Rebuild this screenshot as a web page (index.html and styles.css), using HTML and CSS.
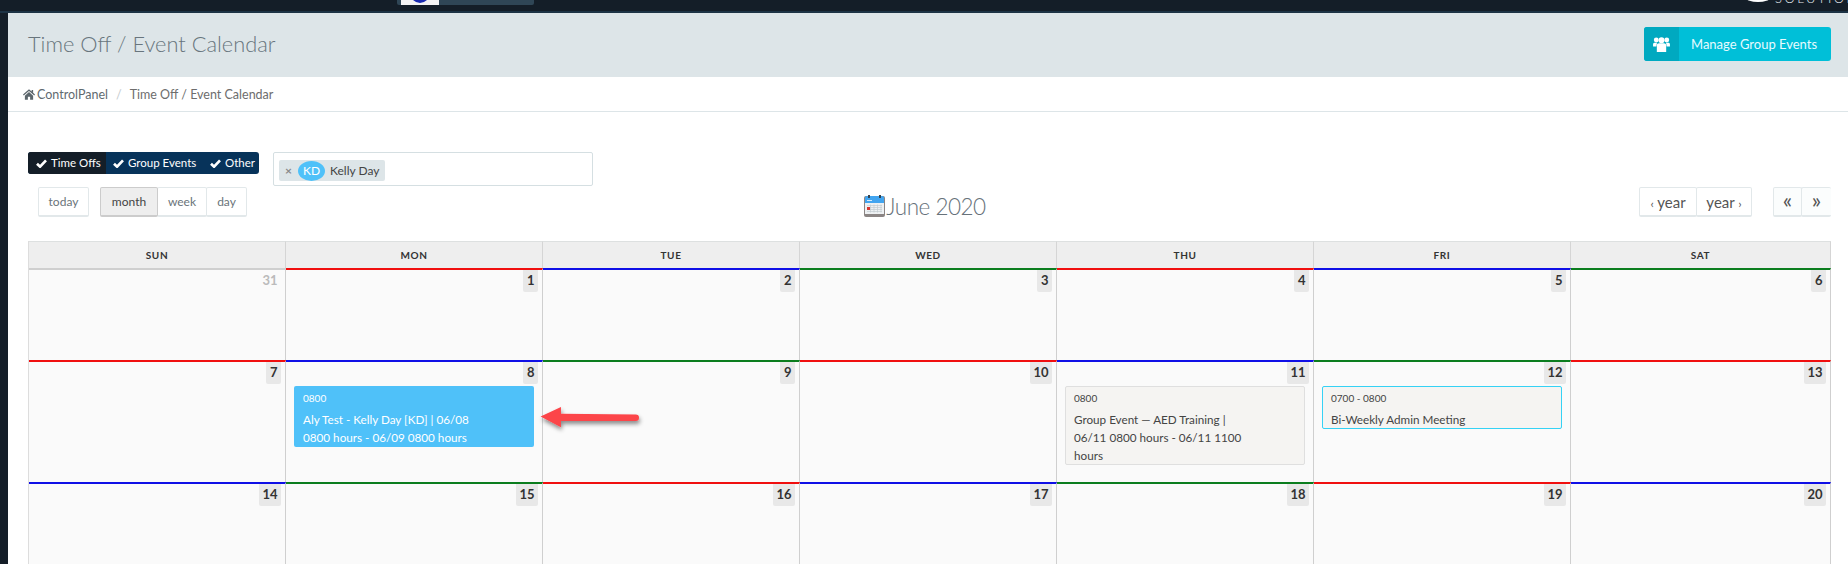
FILE: index.html
```html
<!DOCTYPE html>
<html lang="en">
<head>
<meta charset="utf-8">
<title>Time Off / Event Calendar</title>
<link rel="stylesheet" href="styles.css">
</head>
<body>
<header class="topbar">
  <div class="logo-tab">
    <div class="logo-box"><svg class="logo-mark" viewBox="0 0 16 3"><path d="M1 0h14l-3 2-4 1-4-1z" fill="#1a2bb0"/></svg></div>
  </div>
  <div class="brand">
    <svg class="brand-mark" viewBox="0 0 24 2"><ellipse cx="12" cy="-2" rx="12" ry="4" fill="#fff"/></svg>
    <span class="brand-text">SOLUTIONS</span>
  </div>
</header>
<div class="layout">
  <aside class="sidebar"></aside>
  <main class="main">
    <section class="page-head">
      <h1 class="page-title">Time Off / Event Calendar</h1>
      <a class="manage-btn">
        <span class="manage-icon">
          <svg viewBox="0 0 18 16" class="users-icon"><circle cx="3.400" cy="3.200" r="2.600"/><circle cx="14.600" cy="3.200" r="2.600"/><circle cx="9" cy="3.400" r="3.200"/><path d="M0 10V7.600c0-1 .8-1.600 1.800-1.600h2.400L3.400 10zM18 10V7.600c0-1-.8-1.600-1.800-1.600h-2.400l.8 4zM4 16V9c0-1.600 1-2.400 2.400-2.400h5.200C13 6.600 14 7.400 14 9v7z"/></svg>
        </span>
        <span class="manage-label">Manage Group Events</span>
      </a>
    </section>
    <nav class="crumbs">
      <svg viewBox="0 0 16 14" class="home-icon"><path d="M8 0 0 7l1 1.200L8 2.200l7 6L16 7l-2.500-2.200V1h-2v2L8 0zM2.500 8.600V14h4v-4h3v4h4V8.600L8 3.800z"/></svg>
      <span class="crumb-link">ControlPanel</span>
      <span class="crumb-sep">/</span>
      <span class="crumb-current">Time Off / Event Calendar</span>
    </nav>
    <section class="content">
      <div class="filters">
        <div class="toggle">
          <span class="toggle-item toggle-dark"><svg class="check" viewBox="0 0 12 10"><path d="M1 5.200 4.400 8.500 11 1.600" /></svg>Time Offs</span>
          <span class="toggle-item toggle-group"><svg class="check" viewBox="0 0 12 10"><path d="M1 5.200 4.400 8.500 11 1.600" /></svg>Group Events</span>
          <span class="toggle-item toggle-other"><svg class="check" viewBox="0 0 12 10"><path d="M1 5.200 4.400 8.500 11 1.600" /></svg>Other</span>
        </div>
        <div class="select-box">
          <span class="chip"><span class="chip-x">×</span><span class="avatar">KD</span><span class="chip-name">Kelly Day</span></span>
        </div>
      </div>
      <div class="cal-toolbar">
        <div class="tb-left">
          <button class="btn btn-today">today</button>
          <div class="btn-group">
            <button class="btn btn-month active">month</button>
            <button class="btn btn-week">week</button>
            <button class="btn btn-day">day</button>
          </div>
        </div>
        <h2 class="cal-title">
          <svg class="cal-icon" viewBox="0 0 21 22">
            <rect x="0" y="1" width="21" height="21" rx="2" fill="#8b8584"/>
            <rect x="1" y="8" width="19" height="11" fill="#eef1f3"/>
            <path d="M1 3a2 2 0 0 1 2-2h15a2 2 0 0 1 2 2v5H1z" fill="#42a5f0"/>
            <rect x="4" y="0" width="2" height="3" fill="#33424e"/><rect x="15" y="0" width="2" height="3" fill="#33424e"/>
            <rect x="3" y="5" width="5" height="1" fill="#d5ecfb"/>
            <path d="M3 10.500h15M3 12.500h15M3 14.500h15M3 16.500h15M6.500 9.500v8M10 9.500v8M13.500 9.500v8M17 9.500v8" stroke="#c3cbd0" stroke-width=".7"/>
            <rect x="3" y="12" width="3" height="3" fill="#d8352e"/>
          </svg>June 2020</h2>
        <div class="tb-right">
          <div class="btn-group">
            <button class="btn btn-year-prev"><span class="chev">‹</span> year</button>
            <button class="btn btn-year-next">year <span class="chev">›</span></button>
          </div>
          <div class="btn-group">
            <button class="btn btn-arrow">«</button>
            <button class="btn btn-arrow btn-arrow-last">»</button>
          </div>
        </div>
      </div>
      <div class="calendar">
        <div class="dow">SUN</div><div class="dow">MON</div><div class="dow">TUE</div><div class="dow">WED</div><div class="dow">THU</div><div class="dow">FRI</div><div class="dow">SAT</div>

        <div class="cell r1"><span class="num muted">31</span></div>
        <div class="cell r1 red"><span class="num">1</span></div>
        <div class="cell r1 blue"><span class="num">2</span></div>
        <div class="cell r1 green"><span class="num">3</span></div>
        <div class="cell r1 red"><span class="num">4</span></div>
        <div class="cell r1 blue"><span class="num">5</span></div>
        <div class="cell r1 green"><span class="num">6</span></div>

        <div class="cell r2 red"><span class="num">7</span></div>
        <div class="cell r2 blue"><span class="num">8</span>
          <div class="event ev-blue"><div class="ev-time">0800</div><div class="ev-title">Aly Test - Kelly Day [KD] | 06/08<br>0800 hours - 06/09 0800 hours</div></div>
        </div>
        <div class="cell r2 green"><span class="num">9</span></div>
        <div class="cell r2 red"><span class="num">10</span></div>
        <div class="cell r2 blue"><span class="num">11</span>
          <div class="event ev-gray"><div class="ev-time">0800</div><div class="ev-title">Group Event — AED Training |<br>06/11 0800 hours - 06/11 1100<br>hours</div></div>
        </div>
        <div class="cell r2 green"><span class="num">12</span>
          <div class="event ev-cyan"><div class="ev-time">0700 - 0800</div><div class="ev-title">Bi-Weekly Admin Meeting</div></div>
        </div>
        <div class="cell r2 red"><span class="num">13</span></div>

        <div class="cell r3 blue"><span class="num">14</span></div>
        <div class="cell r3 green"><span class="num">15</span></div>
        <div class="cell r3 red"><span class="num">16</span></div>
        <div class="cell r3 blue"><span class="num">17</span></div>
        <div class="cell r3 green"><span class="num">18</span></div>
        <div class="cell r3 red"><span class="num">19</span></div>
        <div class="cell r3 blue"><span class="num">20</span></div>
      </div>
    </section>
  </main>
</div>
<svg class="annot-arrow" viewBox="0 0 112 34">
  <defs><filter id="sh" x="-10%" y="-30%" width="120%" height="180%"><feDropShadow dx="1" dy="3" stdDeviation="2" flood-color="#000" flood-opacity=".45"/></filter></defs>
  <path d="M2 13 23 3v7l77 .8a3.200 3.200 0 0 1 0 6.800L23 17.500V24z" fill="#fc4549" filter="url(#sh)"/>
</svg>
</body>
</html>
```
FILE: styles.css
```css
* { box-sizing: border-box; }
html, body { margin: 0; padding: 0; }
body {
  width: 1848px;
  height: 564px;
  overflow: hidden;
  position: relative;
  background: #fff;
  color: #444;
  font-family: "Lato", "Noto Sans", sans-serif;
  font-size: 13px;
}

/* top bar */
.topbar {
  height: 13px;
  background: #141e28;
  border-bottom: 2px solid #1d3345;
  position: relative;
  overflow: hidden;
}
.logo-tab {
  position: absolute;
  left: 397px;
  top: 0;
  width: 137px;
  height: 5px;
  background: #2f4656;
  border-radius: 0 0 2px 2px;
  padding-left: 4px;
}
.logo-box { width: 38px; height: 5px; background: #f4f4f4; display: flex; justify-content: center; }
.logo-mark { width: 16px; height: 3px; display: block; }
.brand { position: absolute; left: 1746px; top: -8px; display: flex; align-items: flex-end; height: 13px; }
.brand-mark { width: 24px; height: 2px; margin-bottom: 3px; display: block; }
.brand-text { color: #e8edf0; font-size: 13px; font-weight: 300; line-height: 13px; letter-spacing: 2.500px; margin-left: 5px; }

/* shell */
.layout { display: flex; height: 551px; }
.sidebar { width: 8px; flex: none; background: #141e28; }
.main { flex: 1; min-width: 0; }

.page-head {
  height: 64px;
  background: #dde5e8;
  display: flex;
  align-items: center;
  justify-content: space-between;
  padding: 0 17px 4px 20px;
}
.page-title { margin: 0; font-weight: 300; font-size: 21.800px; color: #68757d; }
.manage-btn {
  display: flex;
  width: 187px;
  height: 34px;
  margin-top: 2px;
  border-radius: 3px;
  overflow: hidden;
  background: #00bfd8;
  color: #e6fbff;
  align-items: stretch;
}
.manage-icon { width: 35px; background: #00a9c0; display: flex; align-items: center; justify-content: center; }
.users-icon { width: 17px; height: 15px; fill: #fff; }
.manage-label { padding-left: 12px; line-height: 34px; font-size: 13px; white-space: nowrap; }

.crumbs {
  height: 35px;
  border-bottom: 1px solid #dde5e8;
  display: flex;
  align-items: center;
  padding-left: 15px;
  font-size: 12.500px;
  color: #6d6d6d;
}
.home-icon { width: 12px; height: 11px; fill: #5c666c; margin-right: 2px; }
.crumb-link { color: #5f6a70; }
.crumb-sep { color: #c5cccf; margin: 0 8px; }

.content { padding: 40px 17px 0 20px; }

.filters { display: flex; height: 35px; align-items: flex-start; gap: 14px; }
.toggle {
  display: flex;
  width: 231px;
  height: 22px;
  border-radius: 3px;
  overflow: hidden;
  color: #fff;
  font-size: 11.500px;
  line-height: 22px;
  background: #07335a;
}
.toggle-item { display: flex; align-items: center; white-space: nowrap; }
.toggle-dark { width: 78px; background: #141e28; padding-left: 8px; }
.toggle-group { width: 98px; padding-left: 7px; }
.toggle-other { padding-left: 6px; }
.check { width: 11px; height: 9px; margin-right: 4px; fill: none; stroke: #fff; stroke-width: 3; }
.select-box {
  width: 320px;
  height: 34px;
  border: 1px solid #d5dfe2;
  border-radius: 2px;
  padding: 7px 5px;
}
.chip {
  display: inline-flex;
  align-items: center;
  height: 21px;
  width: 106px;
  background: #dde5e8;
  border-radius: 2px;
  color: #444;
  font-size: 12px;
}
.chip-x { width: 19px; text-align: center; color: #888; font-weight: 700; font-size: 12px; }
.avatar {
  width: 27px;
  height: 20px;
  border-radius: 50%;
  background: #4fc1f9;
  color: #fff;
  text-align: center;
  line-height: 20px;
  font-size: 12px;
  margin-right: 5px;
}

.cal-toolbar { display: flex; justify-content: space-between; height: 54px; padding-left: 10px; }
.tb-left, .tb-right { display: flex; align-items: flex-start; }
.tb-left { gap: 11px; }
.tb-right { gap: 21px; }
.btn-group { display: flex; }
.btn {
  font: inherit;
  font-size: 12px;
  height: 30px;
  padding: 0;
  border: 1px solid #e2e8ea;
  border-bottom-width: 2px;
  background: #fff;
  color: #6a747a;
  border-radius: 2px;
  margin-left: -1px;
}
.btn-group .btn:first-child { margin-left: 0; }
.btn-today { width: 51px; margin-left: 0; }
.btn-month { width: 58px; }
.btn-week { width: 50px; }
.btn-day { width: 41px; }
.btn.active { background: #eee; border-color: #ccc; color: #444; z-index: 1; }
.btn-year-prev { width: 58px; font-size: 15px; color: #555; }
.btn-year-next { width: 56px; font-size: 15px; color: #555; }
.chev { font-size: 12px; }
.btn-arrow { width: 30px; font-size: 22px; background: #fbfdfd; color: #555; line-height: 22px; padding-bottom: 4px; }
.btn-arrow:first-child { width: 29px; }
.btn-arrow-last { border-right: 0; }
.cal-title {
  margin: 4px 36px 0 0;
  font-weight: 300;
  font-size: 22.500px;
  letter-spacing: -.5px;
  color: #67727a;
  display: flex;
  align-items: center;
  height: 30px;
}
.cal-icon { width: 21px; height: 22px; margin-right: 1px; }

/* calendar */
.calendar {
  display: grid;
  width: 1803px;
  grid-template-columns: repeat(6, 257px) 1fr;
  grid-template-rows: 27px 92px 122px 82px;
  border-left: 1px solid #ddd;
}
.dow {
  background: #eee;
  border-top: 1px solid #dde0e0;
  border-right: 1px solid #d5d5d5;
  text-align: center;
  font-size: 10px;
  font-weight: 700;
  letter-spacing: .6px;
  line-height: 26px;
  color: #333;
}
.cell {
  background: #fafafa;
  border-right: 1px solid #cfcfcf;
  border-top: 2px solid #cfcfcf;
  padding: 0 4px 0 8px;
  min-width: 0;
}
.red { border-top-color: #f00f0f; }
.blue { border-top-color: #0f0fe6; }
.green { border-top-color: #0b7d1e; }
.num {
  display: block;
  width: fit-content;
  margin-left: auto;
  height: 22px;
  padding: 0 3.500px;
  background: #e8e8e8;
  border-radius: 0 0 2px 2px;
  color: #333;
  font-weight: 700;
  font-size: 13px;
  line-height: 21px;
}
.num.muted { background: none; color: #bbb; }
.event {
  width: 240px;
  margin-top: 2px;
  padding: 5px 9px 0;
  border-radius: 2px;
  font-size: 11.700px;
  line-height: 18px;
}
.ev-time { font-size: 10px; line-height: 14px; margin-bottom: 5px; }
.ev-blue { height: 61px; background: #4fc1f9; color: #fff; }
.ev-gray { height: 79px; background: #f5f4f2; border: 1px solid #dfdfdf; color: #444; padding: 4px 8px 0; }
.ev-cyan { height: 43px; background: #f5f4f2; border: 1px solid #35d2f5; color: #444; padding: 4px 8px 0; }

.annot-arrow { position: absolute; left: 538px; top: 404px; width: 110px; height: 33px; overflow: visible; }
```
